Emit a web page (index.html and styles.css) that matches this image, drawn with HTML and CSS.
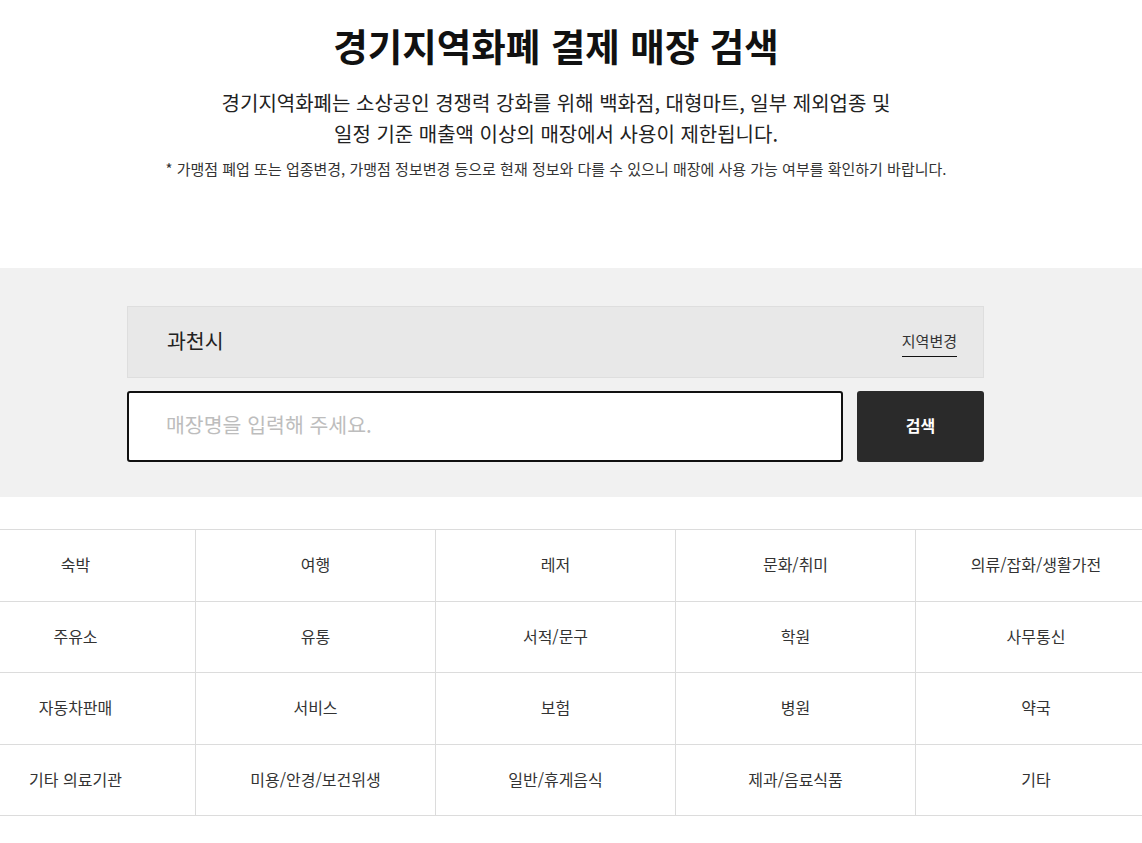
FILE: index.html
```html
<!DOCTYPE html>
<html lang="ko">
<head>
    <meta charset="UTF-8">
    <meta name="viewport" content="width=device-width, initial-scale=1.0">
    <title>경기지역화폐 결제 매장 검색</title>
    <link rel="stylesheet" href="styles.css">
</head>
<body>
    <div class="page">
        <div class="intro">
            <h1>경기지역화폐 결제 매장 검색</h1>
            <p class="intro-desc">경기지역화폐는 소상공인 경쟁력 강화를 위해 백화점, 대형마트, 일부 제외업종 및<br>일정 기준 매출액 이상의 매장에서 사용이 제한됩니다.</p>
            <p class="intro-note">* 가맹점 폐업 또는 업종변경, 가맹점 정보변경 등으로 현재 정보와 다를 수 있으니 매장에 사용 가능 여부를 확인하기 바랍니다.</p>
        </div>

        <div class="search-band">
            <div class="search-inner">
                <div class="region-box">
                    <span class="region-name">과천시</span>
                    <a href="#" class="region-change">지역변경</a>
                </div>
                <form class="search-row" onsubmit="return false;">
                    <input type="text" class="search-input" placeholder="매장명을 입력해 주세요.">
                    <button type="submit" class="search-btn">검색</button>
                </form>
            </div>
        </div>

        <ul class="category-grid">
            <li class="category-cell">숙박</li>
            <li class="category-cell">여행</li>
            <li class="category-cell">레저</li>
            <li class="category-cell">문화/취미</li>
            <li class="category-cell">의류/잡화/생활가전</li>
            <li class="category-cell">주유소</li>
            <li class="category-cell">유통</li>
            <li class="category-cell">서적/문구</li>
            <li class="category-cell">학원</li>
            <li class="category-cell">사무통신</li>
            <li class="category-cell">자동차판매</li>
            <li class="category-cell">서비스</li>
            <li class="category-cell">보험</li>
            <li class="category-cell">병원</li>
            <li class="category-cell">약국</li>
            <li class="category-cell">기타 의료기관</li>
            <li class="category-cell">미용/안경/보건위생</li>
            <li class="category-cell">일반/휴게음식</li>
            <li class="category-cell">제과/음료식품</li>
            <li class="category-cell">기타</li>
        </ul>
    </div>
</body>
</html>
```

FILE: styles.css
```css
:root {
    --text-dark: #111;
    --text-body: #333;
    --line: #dcdcdc;
    --band: #f1f1f1;
}

* {
    margin: 0;
    padding: 0;
    box-sizing: border-box;
}

body {
    font-family: "Noto Sans CJK KR", "Noto Sans", sans-serif;
    background: #fff;
    color: var(--text-body);
    overflow-x: hidden;
}

.page {
    width: 1200px;
    margin-left: -44px;
}

.intro {
    padding: 22px 0 89px;
    text-align: center;
}

.intro h1 {
    font-size: 37.5px;
    line-height: 46px;
    font-weight: 700;
    color: var(--text-dark);
}

.intro-desc {
    margin-top: 19px;
    font-size: 20px;
    line-height: 31px;
    color: #222;
}

.intro-note {
    margin-top: 10px;
    font-size: 15px;
    line-height: 20px;
    color: #333;
}

.search-band {
    background: var(--band);
    padding: 38px 0 35px;
}

.search-inner {
    width: 857px;
    margin: 0 0 0 171px;
}

.region-box {
    height: 72px;
    background: #e8e8e8;
    border: 1px solid #dedede;
    display: flex;
    justify-content: space-between;
    align-items: center;
    padding: 0 26px 4px 39px;
}

.region-name {
    font-size: 20.5px;
    color: #222;
}

.region-change {
    font-size: 15px;
    line-height: 20px;
    color: #333;
    text-decoration: none;
    border-bottom: 1px solid #111;
    padding-bottom: 5px;
    margin-top: 7px;
}

.search-row {
    display: flex;
    gap: 14px;
    margin-top: 13px;
    height: 71px;
}

.search-input {
    flex: 1;
    border: 2px solid #111;
    border-radius: 3px;
    background: #fff;
    padding: 0 37px 5px;
    font-family: inherit;
    font-size: 20.5px;
    color: #222;
    outline: none;
}

.search-input::placeholder {
    color: #bdbdbd;
}

.search-btn {
    width: 127px;
    border: none;
    border-radius: 3px;
    background: #2a2a2a;
    color: #fff;
    font-family: inherit;
    font-size: 16px;
    font-weight: 700;
    padding-bottom: 3px;
    cursor: pointer;
}

.category-grid {
    list-style: none;
    margin-top: 32px;
    display: grid;
    grid-template-columns: repeat(5, 1fr);
    border-top: 1px solid var(--line);
}

.category-cell {
    height: 71.5px;
    display: flex;
    align-items: center;
    justify-content: center;
    padding-bottom: 2px;
    font-size: 16px;
    color: var(--text-body);
    border-bottom: 1px solid var(--line);
    border-right: 1px solid var(--line);
}

.category-cell:nth-child(5n) {
    border-right: none;
}
```
